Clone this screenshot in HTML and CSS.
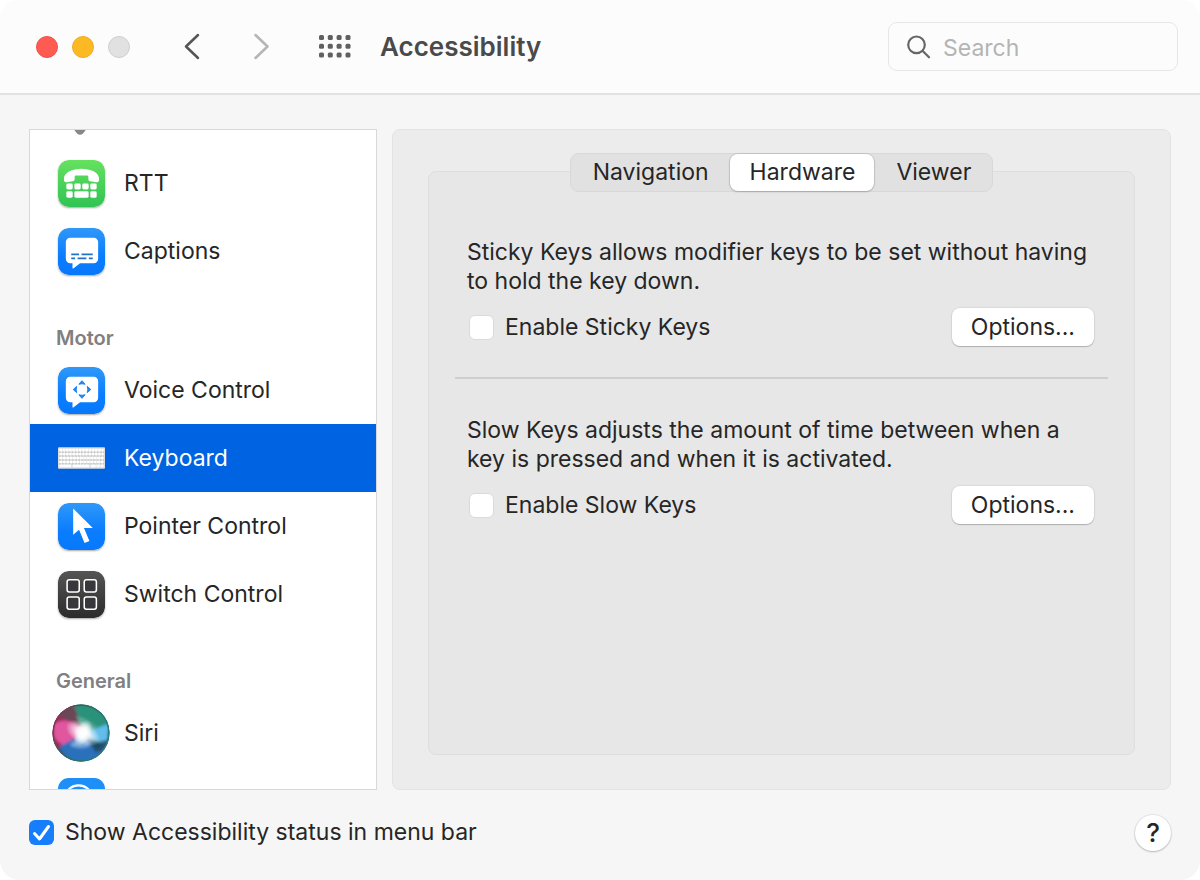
FILE: index.html
```html
<!DOCTYPE html>
<html lang="en">
<head>
<meta charset="utf-8">
<title>Accessibility</title>
<link rel="stylesheet" href="styles.css">
</head>
<body>
<svg class="defs" width="0" height="0" aria-hidden="true">
  <defs>
    <linearGradient id="green" x1="0" y1="0" x2="0" y2="1"><stop offset="0" stop-color="#66e15f"/><stop offset="1" stop-color="#30c354"/></linearGradient>
    <linearGradient id="blue" x1="0" y1="0" x2="0" y2="1"><stop offset="0" stop-color="#2f98f8"/><stop offset="0.6" stop-color="#0a7dff"/><stop offset="1" stop-color="#0878fb"/></linearGradient>
    <linearGradient id="dark" x1="0" y1="0" x2="0" y2="1"><stop offset="0" stop-color="#555"/><stop offset="1" stop-color="#2b2b2c"/></linearGradient>
  </defs>
</svg>
<div class="window">
  <header class="toolbar">
    <div class="lights">
      <button class="light light-close" aria-label="Close"></button>
      <button class="light light-min" aria-label="Minimize"></button>
      <button class="light light-zoom" aria-label="Zoom" disabled></button>
    </div>
    <nav class="history">
      <button class="icon-button" aria-label="Back"><svg width="18" height="28" viewBox="0 0 18 28"><path d="M14 2 2 13.500 14 25" fill="none" stroke="#555" stroke-width="2.500" stroke-linecap="round" stroke-linejoin="round"/></svg></button>
      <button class="icon-button" aria-label="Forward" disabled><svg width="18" height="28" viewBox="0 0 18 28"><path d="M3.500 2 15.500 13.500 3.500 25" fill="none" stroke="#b5b5b5" stroke-width="2.500" stroke-linecap="round" stroke-linejoin="round"/></svg></button>
    </nav>
    <button class="icon-button" aria-label="Show all">
      <svg width="33" height="24" viewBox="0 0 33 24" fill="#606060">
        <rect x="1" y="0" width="5" height="5" rx="1.500"/><rect x="9.800" y="0" width="5" height="5" rx="1.500"/><rect x="18.600" y="0" width="5" height="5" rx="1.500"/><rect x="27.500" y="0" width="5" height="5" rx="1.500"/>
        <rect x="1" y="8.800" width="5" height="5" rx="1.500"/><rect x="9.800" y="8.800" width="5" height="5" rx="1.500"/><rect x="18.600" y="8.800" width="5" height="5" rx="1.500"/><rect x="27.500" y="8.800" width="5" height="5" rx="1.500"/>
        <rect x="1" y="17.600" width="5" height="5" rx="1.500"/><rect x="9.800" y="17.600" width="5" height="5" rx="1.500"/><rect x="18.600" y="17.600" width="5" height="5" rx="1.500"/><rect x="27.500" y="17.600" width="5" height="5" rx="1.500"/>
      </svg>
    </button>
    <h1 class="title">Accessibility</h1>
    <label class="search">
      <svg width="24" height="24" viewBox="0 0 24 24" fill="none" stroke="#666" stroke-width="2.200" stroke-linecap="round"><circle cx="9.500" cy="9.800" r="8.300"/><path d="m15.700 16 6.300 6.300"/></svg>
      <input class="search-input" type="search" placeholder="Search" aria-label="Search">
    </label>
  </header>

  <div class="content">
    <nav class="sidebar" aria-label="Accessibility features">
      <ul class="list">
        <li class="row"><span class="icon"><svg width="47" height="47" viewBox="0 0 48 48" aria-hidden="true"><path d="M16 38h13l-3.500 4.500q-3 2.500-6 0Z" fill="#888"/></svg></span></li>
        <li><a class="row" href="#rtt"><span class="icon">
          <svg class="tile" width="47" height="47" viewBox="0 0 48 48"><rect width="48" height="48" rx="11" fill="url(#green)"/><g fill="#fff"><path d="M6 19.500C6 12.500 15 9 24 9s18 3.500 18 10.500c0 2.500-1 3.500-3 3.200l-6-.9c-1.500-.3-2-1-2-2.300v-2.300c0-1-.6-1.400-2-1.400H19c-1.400 0-2 .4-2 1.400v2.300c0 1.300-.5 2-2 2.300l-6 .9c-2 .3-3-.7-3-3.200Z"/><rect x="8.500" y="24" width="6.500" height="6" rx="1.500"/><rect x="16.700" y="24" width="6.500" height="6" rx="1.500"/><rect x="24.800" y="24" width="6.500" height="6" rx="1.500"/><rect x="33" y="24" width="6.500" height="6" rx="1.500"/><rect x="8.500" y="32" width="6.500" height="6.500" rx="1.500"/><rect x="16.700" y="32" width="14.600" height="6.500" rx="1.500"/><rect x="33" y="32" width="6.500" height="6.500" rx="1.500"/></g></svg>
        </span>RTT</a></li>
        <li><a class="row" href="#captions"><span class="icon">
          <svg class="tile" width="47" height="47" viewBox="0 0 48 48"><rect width="48" height="48" rx="11" fill="url(#blue)"/><path d="M12.500 10h24a4.500 4.500 0 0 1 4.500 4.500v17a4.500 4.500 0 0 1-4.500 4.500H22.500l-6.500 5.200q-1.200.6-1.200-.7V36h-2.300A4.500 4.500 0 0 1 8 31.500v-17A4.500 4.500 0 0 1 12.500 10Z" fill="#fff"/><path d="M13.500 27h8M24 27h11.500M13.500 31h4M20 31h9M31.500 31h4" stroke="#1f74c8" stroke-width="1.900"/></svg>
        </span>Captions</a></li>
      </ul>

      <h2 class="group">Motor</h2>
      <ul class="list">
        <li><a class="row" href="#voice"><span class="icon">
          <svg class="tile" width="47" height="47" viewBox="0 0 48 48"><rect width="48" height="48" rx="11" fill="url(#blue)"/><path d="M12.500 10h24a4.500 4.500 0 0 1 4.500 4.500v17a4.500 4.500 0 0 1-4.500 4.500H22.500l-6.500 5.200q-1.200.6-1.200-.7V36h-2.300A4.500 4.500 0 0 1 8 31.500v-17A4.500 4.500 0 0 1 12.500 10Z" fill="#fff"/><path d="m24.500 14 3.200 3.600q-3.200-1-6.400 0ZM24.500 32l3.200-3.600q-3.200 1-6.400 0ZM15.500 23l3.600-3.200q-1 3.200 0 6.400ZM33.500 23l-3.600-3.200q1 3.200 0 6.400Z" fill="#2382ef" stroke="#2382ef" stroke-width="1" stroke-linejoin="round"/></svg>
        </span>Voice Control</a></li>
        <li><a class="row row-selected" href="#keyboard" aria-current="page"><span class="icon">
          <svg width="47" height="24" viewBox="0 0 48 24"><rect y="1" width="48" height="22" rx="1" fill="#dedede"/><g stroke="#fff" stroke-width="3.100"><path d="M1.500 4h45" stroke-dasharray="2.700 .6"/><path d="M1.500 8h45" stroke-dasharray="2.500 .8"/><path d="M1.500 12h45" stroke-dasharray="3 .5"/><path d="M1.500 16h45" stroke-dasharray="2.700 .8"/><path d="M1.500 20h12M15 20h17M33.500 20h5M39.300 20h3.200M43.300 20h3.200"/></g><path d="M1 6h46M1 10h46M1 14h46M1 18h46" stroke="#aaa" stroke-width=".8" stroke-dasharray="2.300 .9"/></svg>
        </span>Keyboard</a></li>
        <li><a class="row" href="#pointer"><span class="icon">
          <svg class="tile" width="47" height="47" viewBox="0 0 48 48"><rect width="48" height="48" rx="11" fill="url(#blue)"/><path d="M15.500 5.500v27l6-5.300 5.600 13.600 5-2.100-5.600-13.200h9Z" fill="#fff"/></svg>
        </span>Pointer Control</a></li>
        <li><a class="row" href="#switch"><span class="icon">
          <svg class="tile" width="47" height="47" viewBox="0 0 48 48"><rect width="48" height="48" rx="11" fill="url(#dark)"/><g fill="#37373c" stroke="#fff" stroke-width="1.600"><rect x="9.300" y="9" width="12.400" height="12.400" rx="2.200"/><rect x="26.800" y="9" width="12.400" height="12.400" rx="2.200"/><rect x="9.300" y="26.600" width="12.400" height="12.400" rx="2.200"/><rect x="26.800" y="26.600" width="12.400" height="12.400" rx="2.200"/></g></svg>
        </span>Switch Control</a></li>
      </ul>

      <h2 class="group">General</h2>
      <ul class="list">
        <li><a class="row" href="#siri"><span class="icon">
          <svg width="58" height="58" viewBox="0 0 58 58">
            <defs>
              <clipPath id="orb"><circle cx="29" cy="29" r="28.500"/></clipPath>
              <filter id="soft" x="-30%" y="-30%" width="160%" height="160%"><feGaussianBlur stdDeviation="1.800"/></filter>
              <radialGradient id="glow"><stop offset="0" stop-color="#fff"/><stop offset=".4" stop-color="#fff" stop-opacity=".8"/><stop offset="1" stop-color="#fff" stop-opacity="0"/></radialGradient>
              <linearGradient id="rim" x1="0" y1="0" x2="1" y2=".4"><stop offset="0" stop-color="#a01f4e"/><stop offset=".5" stop-color="#306b5c"/><stop offset="1" stop-color="#257d83"/></linearGradient>
            </defs>
            <g clip-path="url(#orb)">
              <rect width="58" height="58" fill="#34507a"/>
              <g filter="url(#soft)">
                <path d="M-6-6H24L30 28 4 46-6 52Z" fill="#a02858"/>
                <path d="M20-6H64V28L32 28Q20 14 20-6Z" fill="#2a917a"/>
                <path d="M8 6 22 2 32 26Q20 16 8 14Z" fill="#6b4654"/>
                <path d="M24 12Q40 16 50 30L34 29Z" fill="#5fae9f"/>
                <path d="M2 20Q16 10 32 28L20 42Q6 42 2 32Z" fill="#e0569f"/>
                <path d="M32 29 56 20V36L44 39Z" fill="#62bdea"/>
                <path d="M31 30 8 42Q12 60 38 64L50 50Z" fill="#2c70bb"/>
                <path d="M30 29 18 41Q26 46 38 42Z" fill="#7aa9dc"/>
                <path d="M35 33 52 40 44 49Z" fill="#1d4b63"/>
              </g>
              <ellipse cx="31" cy="29" rx="19" ry="11" fill="url(#glow)" transform="rotate(30 31 29)"/>
              <ellipse cx="31" cy="29" rx="8" ry="14" fill="url(#glow)" transform="rotate(25 31 29)"/>
            </g>
            <circle cx="29" cy="29" r="27.800" fill="none" stroke="url(#rim)" stroke-width="1.400"/>
          </svg>
        </span>Siri</a></li>
        <li class="row"><span class="icon">
          <svg width="47" height="47" viewBox="0 0 48 48" aria-hidden="true"><rect width="48" height="48" rx="11" fill="#1f8ff8"/><circle cx="21" cy="22" r="14.500" fill="none" stroke="#fff" stroke-width="2.200"/></svg>
        </span></li>
      </ul>
    </nav>

    <main class="panel">
      <section class="box">
        <div class="tabs" role="tablist">
          <button class="tab" role="tab" aria-selected="false">Navigation</button>
          <button class="tab tab-active" role="tab" aria-selected="true">Hardware</button>
          <button class="tab" role="tab" aria-selected="false">Viewer</button>
        </div>
        <div class="setting">
          <p class="text">Sticky Keys allows modifier keys to be set without having to hold the key down.</p>
          <div class="controls">
            <label class="check"><input class="checkbox" type="checkbox">Enable Sticky Keys</label>
            <button class="button">Options...</button>
          </div>
        </div>
        <hr class="divider">
        <div class="setting">
          <p class="text">Slow Keys adjusts the amount of time between when a key is pressed and when it is activated.</p>
          <div class="controls">
            <label class="check"><input class="checkbox" type="checkbox">Enable Slow Keys</label>
            <button class="button">Options...</button>
          </div>
        </div>
      </section>
    </main>
  </div>

  <footer class="footer">
    <label class="check"><input class="checkbox" type="checkbox" checked>Show Accessibility status in menu bar</label>
    <button class="help" aria-label="Help">?</button>
  </footer>
</div>
</body>
</html>
```
FILE: styles.css
```css
* { box-sizing: border-box; }

body {
  margin: 0;
  background: #fff;
  color: #262626;
  font: 23px/29px Inter, "Liberation Sans", sans-serif;
}

.defs { position: absolute; }

button, input { font: inherit; color: inherit; }
button { border: 0; padding: 0; background: none; }
svg { display: block; flex: none; }

.window {
  display: flex;
  flex-direction: column;
  height: 100vh;
  min-height: 600px;
  overflow: hidden;
  border-radius: 20px;
  background: #f6f6f6;
}

/* Toolbar */
.toolbar {
  display: flex;
  align-items: center;
  flex: none;
  height: 95px;
  padding: 0 22px 0 36px;
  border-bottom: 2px solid #e2e2e2;
  background: #fcfcfc;
}

.lights { display: flex; gap: 14px; }
.light { width: 22px; height: 22px; border-radius: 50%; }
.light-close { background: #ff5b53; border: 1px solid #ec5149; }
.light-min { background: #fdb924; border: 1px solid #efad20; }
.light-zoom { background: #e1e1e1; border: 1px solid #cfcfcf; }

.history { display: flex; gap: 50px; margin: 0 48px 0 54px; }
.icon-button { display: flex; }

.title { margin: 0 0 0 29px; font-size: 26px; line-height: 32px; font-weight: 600; color: #4a4a4a; }

.search {
  display: flex;
  align-items: center;
  gap: 12px;
  width: 290px;
  height: 49px;
  margin-left: auto;
  padding: 0 18px;
  border: 1px solid #e6e6e6;
  border-radius: 9px;
}
.search-input {
  flex: 1;
  min-width: 0;
  padding: 3px 0 0;
  border: 0;
  outline: 0;
  appearance: none;
  background: none;
}
.search-input::placeholder { color: #b4b4b4; opacity: 1; }

/* Body */
.content {
  display: grid;
  grid-template-columns: 348px minmax(0, 1fr);
  gap: 15px;
  flex: 1;
  min-height: 0;
  padding: 34px 29px 0;
}

.sidebar {
  overflow: hidden;
  border: 1px solid #d8d8d8;
  background: #fff;
}
.list { margin: 0; padding: 0; list-style: none; }
/* The list is scrolled part of the way past its first row. */
.sidebar > .list:first-child { margin-top: -49px; }
.row {
  display: flex;
  align-items: center;
  gap: 14px;
  height: 68px;
  padding: 0 22px;
  color: inherit;
  text-decoration: none;
}
.row-selected { background: #0063e1; color: #fff; }
.icon { display: flex; justify-content: center; flex: none; width: 58px; }
.tile { border-radius: 11px; box-shadow: 0 1px 2px rgba(0, 0, 0, 0.35); }
.group {
  margin: 35px 26px 0;
  font-size: 20px;
  line-height: 36px;
  font-weight: 600;
  color: #808080;
}

.panel {
  padding: 41px 35px 34px;
  border: 1px solid #e3e3e3;
  border-radius: 8px;
  background: #ececec;
}
.box {
  display: flex;
  flex-direction: column;
  height: 100%;
  padding: 0 26px;
  border: 1px solid #dedede;
  border-radius: 8px;
  background: #e7e7e7;
}
.tabs {
  display: flex;
  align-self: center;
  margin: -19px 0 46px;
  border: 1px solid #d8d8d8;
  border-radius: 9px;
  background: #e1e1e1;
}
.tab { height: 37px; padding: 0 21px 0 22px; border-radius: 8px; }
.tab-active {
  padding: 0 19px 0 20px;
  background: #fff;
  box-shadow: 0 0 1px 1px rgba(0, 0, 0, 0.1), 0 1px 2px rgba(0, 0, 0, 0.15);
}

.setting { padding: 0 14px 0 12px; }
.text { margin: 0 0 12px; }
.controls { display: flex; justify-content: space-between; align-items: center; }
.controls .check { padding-left: 2px; }
.check { display: flex; align-items: center; gap: 11px; }
.checkbox {
  flex: none;
  width: 25px;
  height: 25px;
  margin: 0;
  appearance: none;
  border: 1px solid #dadada;
  border-radius: 6px;
  background: #fff;
}
.checkbox:checked {
  border: 0;
  background: #167efb url("data:image/svg+xml,%3Csvg xmlns='http://www.w3.org/2000/svg' viewBox='0 0 25 25'%3E%3Cpath d='M5.500 13.500 10.500 19 19.500 6.500' fill='none' stroke='white' stroke-width='3' stroke-linecap='round' stroke-linejoin='round'/%3E%3C/svg%3E") center / 25px 25px;
}
.button {
  height: 38px;
  padding: 0 19px;
  border-radius: 8px;
  background: #fff;
  box-shadow: 0 0 1px 1px rgba(0, 0, 0, 0.06), 0 1px 1px rgba(0, 0, 0, 0.2);
}
.divider { width: 100%; height: 2px; margin: 31px 0 37px; border: 0; background: #cecece; }

/* Footer */
.footer {
  display: flex;
  align-items: center;
  justify-content: space-between;
  flex: none;
  height: 90px;
  padding: 0 29px 5px;
}
.help {
  width: 36px;
  height: 36px;
  border-radius: 50%;
  background: #fff;
  font-size: 26px;
  font-weight: 500;
  box-shadow: 0 0 1px 1px rgba(0, 0, 0, 0.07), 0 1px 2px rgba(0, 0, 0, 0.2);
}
```
